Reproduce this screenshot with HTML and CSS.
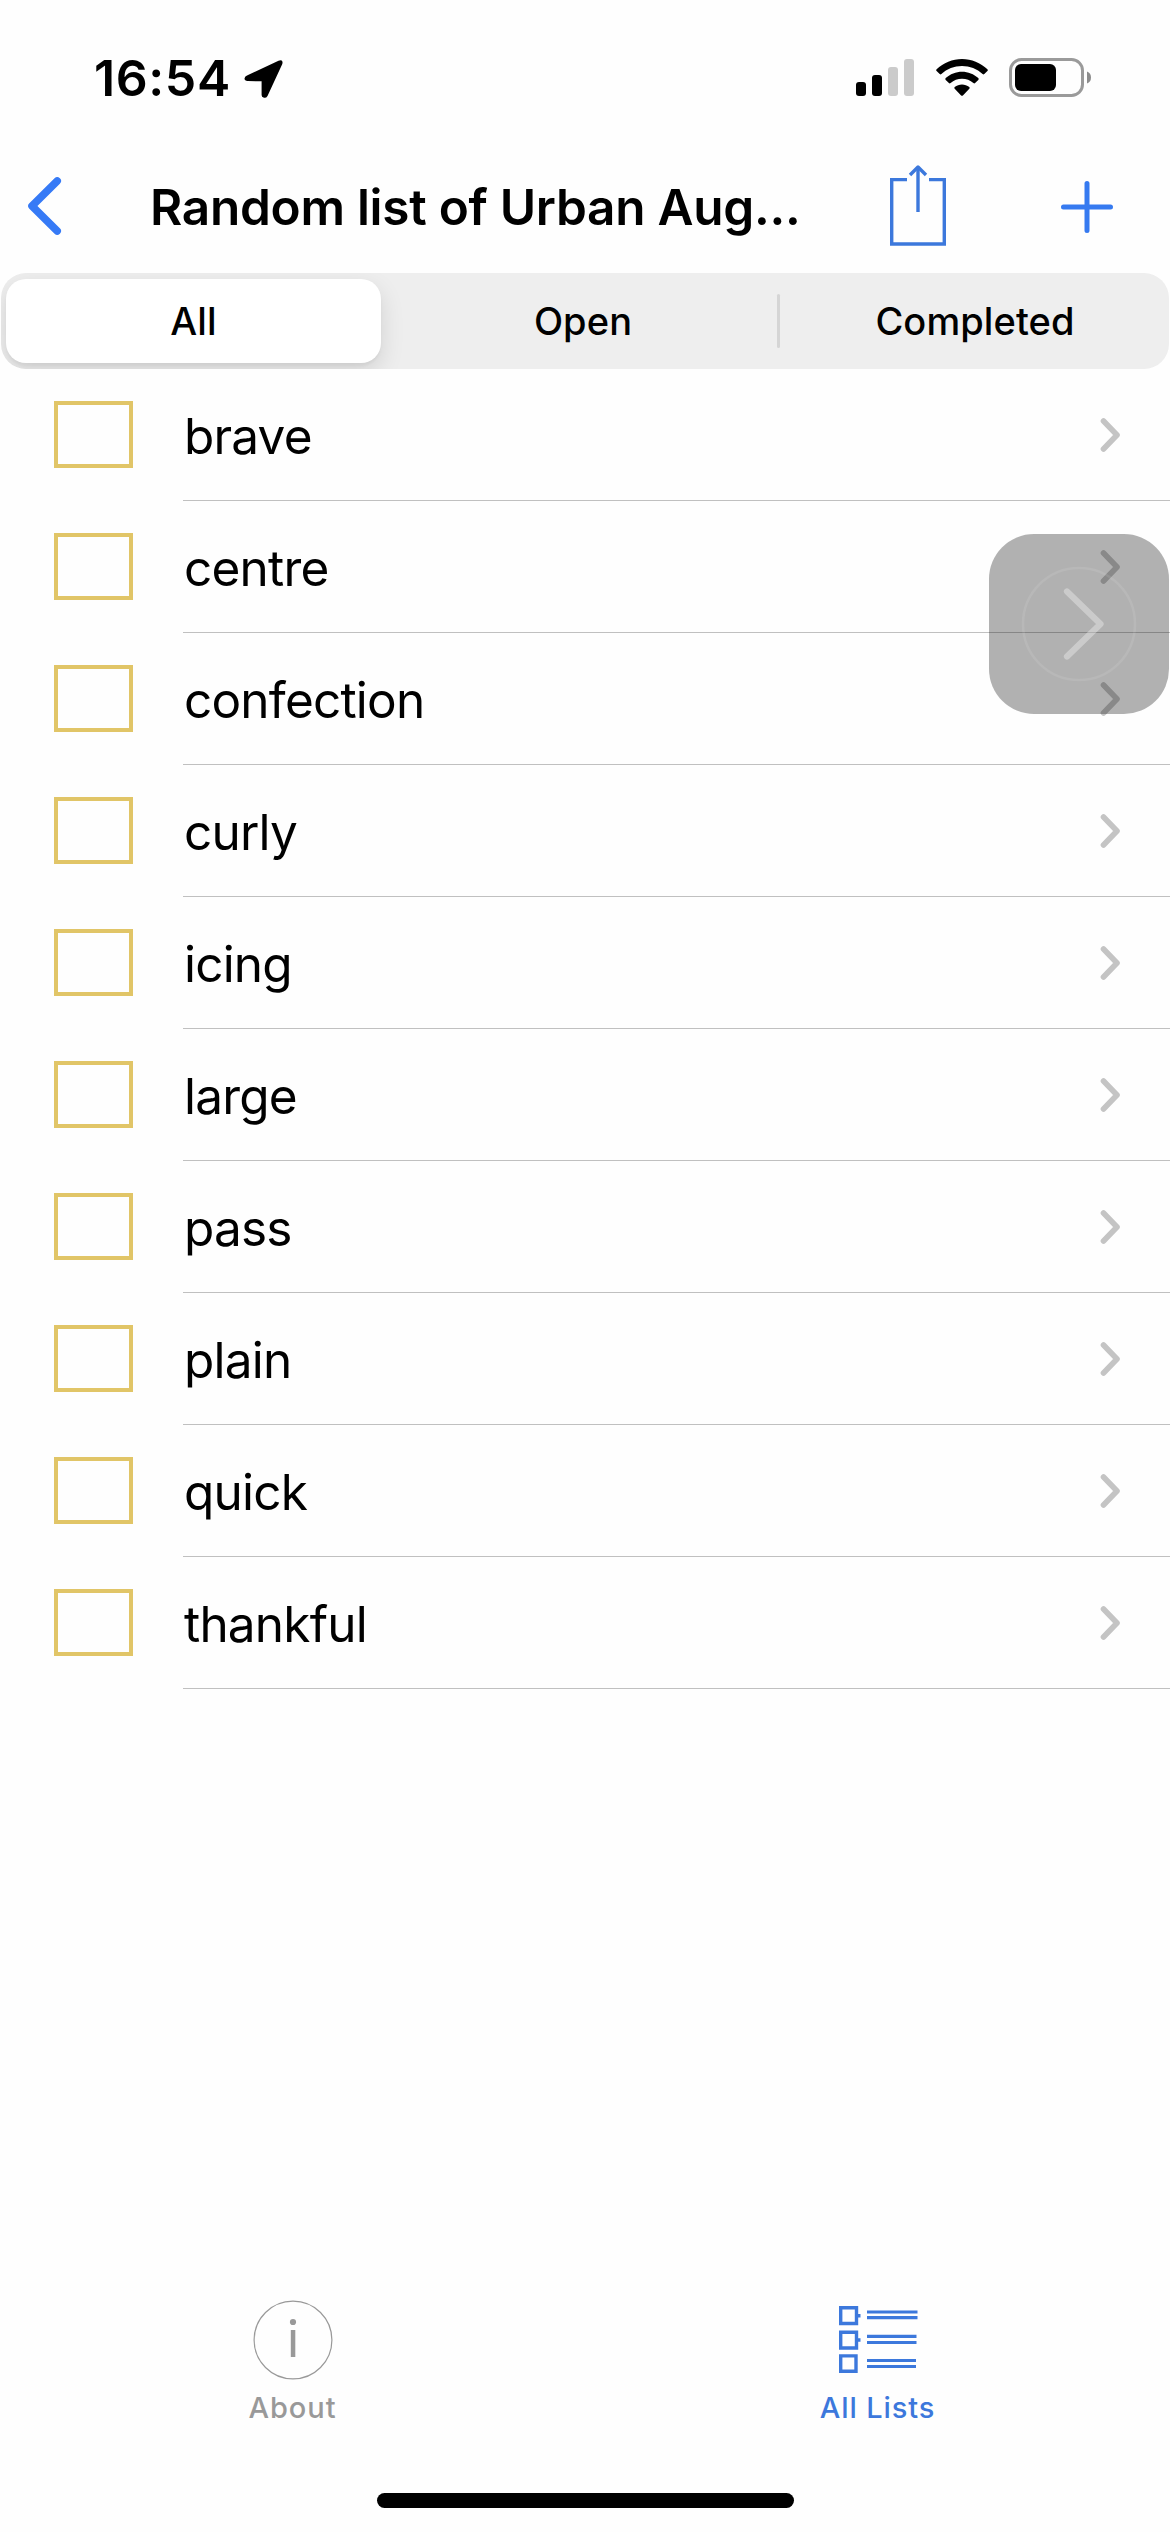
FILE: index.html
```
<!DOCTYPE html>
<html lang="en">
<head>
<meta charset="utf-8">
<title>Random list of Urban Aug...</title>
<link rel="stylesheet" href="styles.css">
</head>
<body>
<svg class="defs" width="0" height="0" aria-hidden="true">
  <symbol id="chevron" viewBox="0 0 24 38"><path d="M5.5 5 L19 19 L5.5 33" fill="none" stroke="#c4c4c4" stroke-width="5.6" stroke-linecap="round" stroke-linejoin="round"/></symbol>
</svg>
<div class="screen">
  <header class="status">
    <span class="time">16:54</span>
    <svg class="location" width="40" height="40" viewBox="0 0 40 40"><path d="M3 16.5 L34.5 1.8 Q39.5 0 38.3 5 L23.5 37 Q22 39.5 19.5 38.6 Q17.6 38 17.6 36 L17.6 22.3 L3.6 22 Q.5 21.5 .5 19.4 Q.6 17.6 3 16.5Z"/></svg>
    <svg class="signal" width="58" height="38" viewBox="0 0 58 38"><rect y="23" width="10" height="14" rx="3"/><rect x="16" y="16" width="10" height="21" rx="3"/><g fill="#cbcbcb"><rect x="32" y="8" width="10" height="29" rx="3"/><rect x="48" y="0" width="10" height="37" rx="3"/></g></svg>
    <svg class="wifi" width="52" height="38" viewBox="0 0 52 38"><path d="M26 0 C35.500 0 44.500 3.700 51.400 10.300 Q52.200 11.200 51.400 12 L48.300 15.100 Q47.500 15.900 46.600 15.100 C41 9.900 33.800 7.100 26 7.100 C18.200 7.100 11 9.900 5.400 15.100 Q4.500 15.900 3.700 15.100 L.6 12 Q-.2 11.200 .6 10.300 C7.500 3.700 16.500 0 26 0Z"/><path d="M26 12.700 C32 12.700 37.900 15 42.300 19.100 Q43.200 20 42.300 20.900 L39.100 24.100 Q38.300 24.900 37.400 24.100 C34.300 21.300 30.200 19.800 26 19.800 C21.800 19.800 17.700 21.300 14.600 24.100 Q13.700 24.900 12.900 24.100 L9.700 20.900 Q8.800 20 9.700 19.100 C14.100 15 20 12.700 26 12.700Z"/><path d="M26 25.500 C28.700 25.500 31.200 26.400 33.300 28.100 Q34.200 29 33.300 29.800 L26.900 36.400 Q26 37.200 25.100 36.400 L18.700 29.800 Q17.800 29 18.700 28.100 C20.800 26.400 23.300 25.500 26 25.500Z"/></svg>
    <svg class="battery" width="83" height="40" viewBox="0 0 83 40"><rect x="1.500" y="1.500" width="72" height="36" rx="11" fill="none" stroke="#9a9a9a" stroke-width="3"/><rect x="6" y="6" width="41" height="27" rx="6"/><path d="M78 13.500 Q82 15 82 19.500 Q82 24 78 25.500Z" fill="#8c8c8c"/></svg>
  </header>
  <nav class="navbar">
    <svg class="back" width="40" height="64" viewBox="0 0 40 64"><path d="M32.200 7 L7 32 L32.200 57" fill="none" stroke="#367af6" stroke-width="7.600" stroke-linecap="round" stroke-linejoin="round"/></svg>
    <h1 class="title">Random list of Urban Aug...</h1>
    <svg class="share" width="56" height="82" viewBox="0 0 56 82" fill="none" stroke="#3c78dc" stroke-width="3.400"><path d="M17 14.600 H1.700 V79 H54.300 V14.600 H39"/><path d="M28 47 V2"/><path d="M20 10 L28 2 L36 10" stroke-linejoin="round"/></svg>
    <svg class="plus" width="52" height="52" viewBox="0 0 52 52"><path d="M26 2.500 V49.500 M2.500 26 H49.500" stroke="#367af0" stroke-width="5" stroke-linecap="round"/></svg>
  </nav>
  <div class="segments">
    <div class="segment selected"><span>All</span></div>
    <div class="segment middle"><span>Open</span></div>
    <div class="segment last"><span>Completed</span></div>
  </div>
  <ul class="list">
    <li class="row"><span class="box"></span><div class="cell"><span>brave</span><svg class="chev"><use href="#chevron"/></svg></div></li>
    <li class="row"><span class="box"></span><div class="cell"><span>centre</span><svg class="chev"><use href="#chevron"/></svg></div></li>
    <li class="row"><span class="box"></span><div class="cell"><span>confection</span><svg class="chev"><use href="#chevron"/></svg></div></li>
    <li class="row"><span class="box"></span><div class="cell"><span>curly</span><svg class="chev"><use href="#chevron"/></svg></div></li>
    <li class="row"><span class="box"></span><div class="cell"><span>icing</span><svg class="chev"><use href="#chevron"/></svg></div></li>
    <li class="row"><span class="box"></span><div class="cell"><span>large</span><svg class="chev"><use href="#chevron"/></svg></div></li>
    <li class="row"><span class="box"></span><div class="cell"><span>pass</span><svg class="chev"><use href="#chevron"/></svg></div></li>
    <li class="row"><span class="box"></span><div class="cell"><span>plain</span><svg class="chev"><use href="#chevron"/></svg></div></li>
    <li class="row"><span class="box"></span><div class="cell"><span>quick</span><svg class="chev"><use href="#chevron"/></svg></div></li>
    <li class="row"><span class="box"></span><div class="cell"><span>thankful</span><svg class="chev"><use href="#chevron"/></svg></div></li>
  </ul>
  <footer class="tabs">
    <div class="tab about">
      <svg width="80" height="80" viewBox="0 0 80 80"><circle cx="40" cy="40" r="38.900" fill="none" stroke="#999" stroke-width="1.200"/><circle cx="40" cy="22" r="3.100" fill="#999"/><rect x="37.800" y="30" width="4.500" height="27" fill="#999"/></svg>
      <span>About</span>
    </div>
    <div class="tab lists">
      <svg width="80" height="80" viewBox="0 0 80 80"><g fill="none" stroke="#3c78dc" stroke-width="3.400"><path d="M2.700 7.700h15.800v15.800H2.700zM2.700 32.200h15.800v15.800H2.700zM2.700 55.900h15.300v15.300H2.700z"/><path d="M18 15.800h4.500M18 40h4.500"/><path d="M29 12h50.500M29 17.600h50.500M29 36.400h49.500M29 42.500h49.500M29 60.500h49M29 66.500h49" stroke-width="3.100"/></g></svg>
      <span>All Lists</span>
    </div>
  </footer>
  <div class="home"></div>
  <div class="assist"><svg width="180" height="180" viewBox="0 0 180 180" fill="none"><circle cx="90" cy="90" r="56" stroke="#fff" stroke-opacity=".09" stroke-width="2.600"/><path d="M78 57.500 L111.500 90 L78 122.500" stroke="#fff" stroke-opacity=".34" stroke-width="6.200" stroke-linecap="round" stroke-linejoin="round"/></svg></div>
</div>
</body>
</html>
```

FILE: styles.css
```
* { box-sizing: border-box; }
body { margin: 0; background: #fefefe; font-family: Inter, "Liberation Sans", sans-serif; color: #000; }
svg { display: block; flex: none; }
.defs { position: absolute; }
.screen { position: relative; width: 1170px; height: 2532px; display: flex; flex-direction: column; overflow: hidden; }

.status { height: 156px; padding-left: 94px; display: flex; align-items: flex-start; }
.time { width: 150px; margin-top: 48px; font-size: 50px; line-height: 60px; font-weight: 600; letter-spacing: 0.6px; }
.location { margin-top: 59px; }
.signal { margin: 59px 0 0 572px; }
.wifi { margin: 59px 0 0 22px; }
.battery { margin: 58px 0 0 21px; }

.navbar { height: 117px; display: flex; align-items: flex-start; }
.back { margin: 18px 0 0 25px; }
.title { width: 739px; margin: 21px 0 0 85px; font-size: 49.5px; line-height: 60px; font-weight: 600; letter-spacing: -0.27px; white-space: nowrap; }
.share { margin: 9px 0 0 1px; }
.plus { margin: 25px 0 0 115px; }

.segments { height: 96px; margin: 0 1px; padding: 6px 5px; border-radius: 25px; background: #eee; display: flex; overflow: hidden; font-size: 38px; line-height: 46px; font-weight: 450; letter-spacing: .1px; }
.segment { display: flex; align-items: center; justify-content: center; }
.selected { width: 375px; border-radius: 20px; background: #fff; box-shadow: 0 9px 24px rgba(0,0,0,.12), 0 3px 3px rgba(0,0,0,.04); font-weight: 500; }
.middle { width: 399px; padding-left: 5px; position: relative; }
.middle::after { content: ""; position: absolute; right: 0; top: 15px; width: 3px; height: 54px; border-radius: 2px; background: #d5d5d5; }
.last { flex: 1; padding-left: 6px; }

.list { margin: 0; padding: 0; list-style: none; font-size: 49.5px; line-height: 60px; }
.row { height: 132px; display: flex; padding-left: 54px; }
.box { width: 79px; height: 67px; margin: 32px 50px 0 0; border: 4px solid #e1c567; }
.cell { flex: 1; display: flex; align-items: center; justify-content: space-between; border-bottom: 1px solid #c0c0c0; padding: 2px 48px 0 1px; letter-spacing: -0.8px; }
.chev { width: 24px; height: 38px; margin-top: -2px; }

.tabs { margin-top: auto; height: 192px; display: grid; grid-template-columns: 1fr 1fr; font-size: 29px; line-height: 36px; font-weight: 500; letter-spacing: .9px; }
.tab { display: flex; flex-direction: column; align-items: center; gap: 10px; }
.about { color: #999; }
.lists { color: #3c78dc; }
.home { width: 417px; height: 15px; margin: 1px auto 24px; border-radius: 8px; background: #000; }
.assist { position: absolute; left: 989px; top: 534px; width: 180px; height: 180px; border-radius: 45px; background: rgba(0,0,0,.3); }
```
